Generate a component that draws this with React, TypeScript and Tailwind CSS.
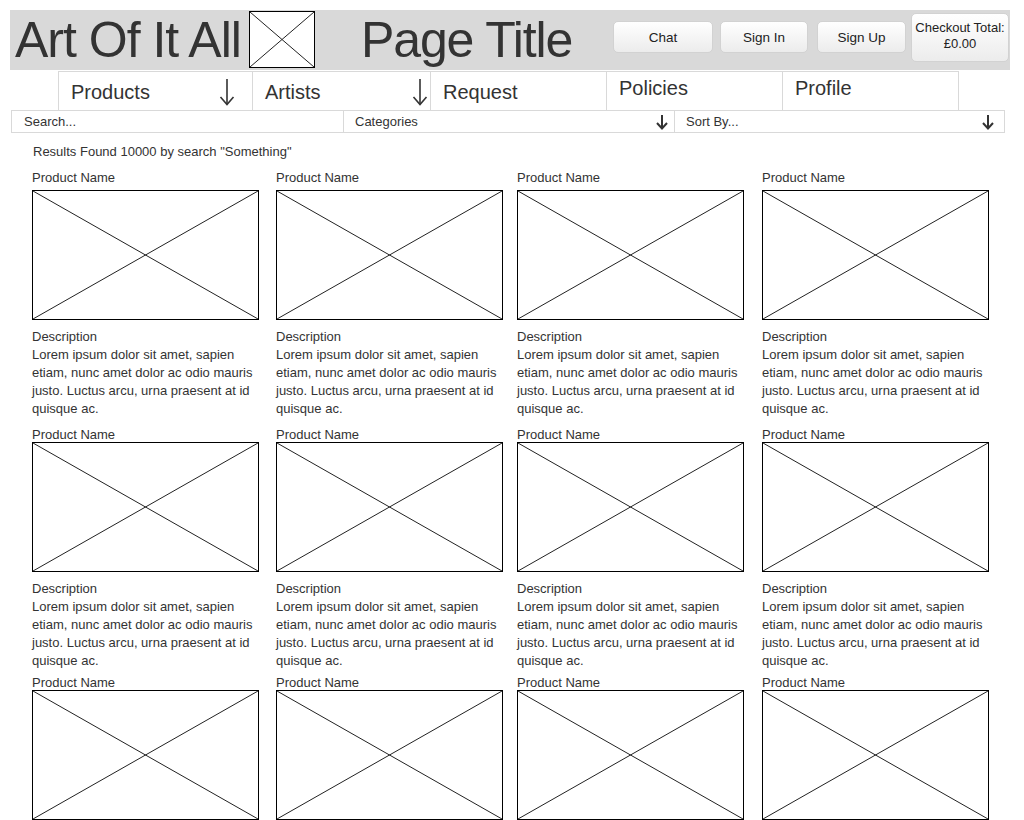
import React from 'react';

const lorem = 'Lorem ipsum dolor sit amet, sapien etiam, nunc amet dolor ac odio mauris justo. Luctus arcu, urna praesent at id quisque ac.';

function Placeholder({ className }: { className: string }) {
  return (
    <div className={`relative border border-black bg-white ${className}`}>
      <svg className="absolute inset-0 h-full w-full" viewBox="0 0 100 100" preserveAspectRatio="none">
        <line x1="0" y1="0" x2="100" y2="100" stroke="#222" strokeWidth="1" vectorEffect="non-scaling-stroke" />
        <line x1="100" y1="0" x2="0" y2="100" stroke="#222" strokeWidth="1" vectorEffect="non-scaling-stroke" />
      </svg>
    </div>
  );
}

function ThinArrow() {
  return (
    <svg width="16" height="28" viewBox="0 0 16 28" className="shrink-0">
      <line x1="8" y1="1" x2="8" y2="26" stroke="#333" strokeWidth="1.6" />
      <polyline points="1.5,19 8,26.5 14.5,19" fill="none" stroke="#333" strokeWidth="1.6" />
    </svg>
  );
}

function SmallArrow() {
  return (
    <svg width="14" height="16" viewBox="0 0 14 16" className="shrink-0">
      <line x1="7" y1="1" x2="7" y2="14" stroke="#333" strokeWidth="2" />
      <polyline points="2,9 7,14.5 12,9" fill="none" stroke="#333" strokeWidth="2" />
    </svg>
  );
}

const headerBtn =
  'flex flex-col items-center justify-center whitespace-nowrap rounded-[5px] border border-[#d2d2d2] bg-gradient-to-b from-white to-[#ececec] text-[13.5px] leading-[16px] text-[#222]';

function Card({ labelClass }: { labelClass: string }) {
  return (
    <div className="flex w-[227px] flex-col">
      <div className={`pt-px text-[13px] leading-[14px] ${labelClass}`}>Product Name</div>
      <Placeholder className="h-[130px] w-[227px]" />
      <div className="mt-[8px] text-[13px] leading-[18px]">Description</div>
      <div className="text-[13px] leading-[18px]">{lorem}</div>
    </div>
  );
}

const rows = ['mt-[10px] mb-[5px]', 'mt-[9px]', 'mt-[5px]'];

export default function App() {
  return (
    <div className="relative h-[820px] w-[1024px] overflow-hidden bg-white text-[#333]" style={{ fontFamily: '"Liberation Sans", Arial, sans-serif' }}>
      {/* Header */}
      <div className="ml-[10px] mt-[10px] flex h-[60px] w-[1000px] bg-[#d9d9d9]">
        <div className="ml-[5px] text-[50px] leading-[60px] tracking-[-1px] whitespace-nowrap">Art Of It All</div>
        <Placeholder className="ml-[8px] mt-px h-[57px] w-[66px]" />
        <div className="ml-[46px] text-[50px] leading-[60px] tracking-[-1.1px] whitespace-nowrap">Page Title</div>
        <div className="ml-auto flex items-start">
          <div className={`${headerBtn} mt-[11px] h-[32px] w-[100px] pt-px`}>Chat</div>
          <div className={`${headerBtn} ml-[7px] mt-[11px] h-[32px] w-[88px] pt-px`}>Sign In</div>
          <div className={`${headerBtn} ml-[9px] mt-[11px] h-[32px] w-[89px] pt-px`}>Sign Up</div>
          <div className={`${headerBtn} ml-[5px] mt-[3px] h-[49px] w-[98px] pb-[4px] text-[13px]`}>
            <span>Checkout Total:</span>
            <span>£0.00</span>
          </div>
          <div className="w-px" />
        </div>
      </div>

      {/* Nav */}
      <div className="ml-[58px] mt-px flex h-[40px] text-[20px] leading-[24px]">
        <div className="flex w-[195px] items-start border border-[#d9d9d9] pl-[12px] pr-[17px] pt-[8px]">
          <span>Products</span>
          <span className="ml-auto -mt-[2px]"><ThinArrow /></span>
        </div>
        <div className="flex w-[178px] items-start border border-l-0 border-[#d9d9d9] pl-[12px] pr-[2px] pt-[8px]">
          <span>Artists</span>
          <span className="ml-auto -mt-[2px]"><ThinArrow /></span>
        </div>
        <div className="w-[176px] border border-l-0 border-[#d9d9d9] pl-[12px] pt-[8px]">Request</div>
        <div className="w-[176px] border border-l-0 border-[#d9d9d9] pl-[12px] pt-[4px]">Policies</div>
        <div className="w-[176px] border border-l-0 border-[#d9d9d9] pl-[12px] pt-[4px]">Profile</div>
      </div>

      {/* Search / filters */}
      <div className="-mt-px ml-[11px] flex h-[23px] w-[994px] border border-[#d9d9d9] text-[13px] leading-[21px]">
        <div className="w-[332px] border-r border-[#d9d9d9] pl-[12px]">Search...</div>
        <div className="flex w-[331px] items-center border-r border-[#d9d9d9] pl-[11px] pr-[5px]">
          <span>Categories</span>
          <span className="ml-auto"><SmallArrow /></span>
        </div>
        <div className="flex flex-1 items-center pl-[11px] pr-[9px]">
          <span>Sort By...</span>
          <span className="ml-auto"><SmallArrow /></span>
        </div>
      </div>

      {/* Results */}
      <div className="ml-[33px] mt-[11px] text-[13px] leading-[16px]">Results Found 10000 by search "Something"</div>

      {rows.map((labelClass, i) => (
        <div key={i} className="ml-[32px] grid grid-cols-[244px_241px_245px_227px]">
          {[0, 1, 2, 3].map((j) => (
            <Card key={j} labelClass={labelClass} />
          ))}
        </div>
      ))}
    </div>
  );
}
